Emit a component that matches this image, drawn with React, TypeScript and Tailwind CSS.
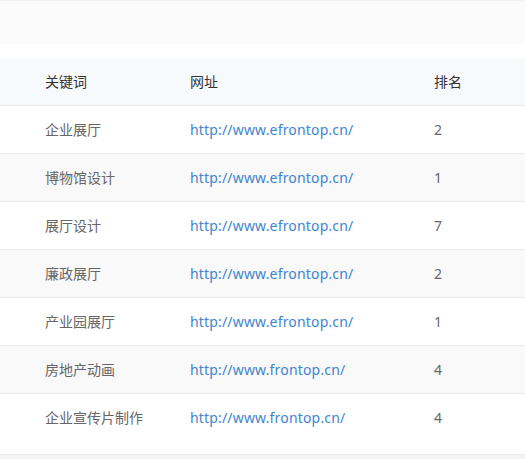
const rows = [
  { kw: '企业展厅', url: 'http://www.efrontop.cn/', rank: 2 },
  { kw: '博物馆设计', url: 'http://www.efrontop.cn/', rank: 1 },
  { kw: '展厅设计', url: 'http://www.efrontop.cn/', rank: 7 },
  { kw: '廉政展厅', url: 'http://www.efrontop.cn/', rank: 2 },
  { kw: '产业园展厅', url: 'http://www.efrontop.cn/', rank: 1 },
  { kw: '房地产动画', url: 'http://www.frontop.cn/', rank: 4 },
  { kw: '企业宣传片制作', url: 'http://www.frontop.cn/', rank: 4 },
];

export default function App() {
  return (
    <div
      className="min-h-[459px] bg-[#f4f4f5] text-[14px]"
      style={{ fontFamily: '"Noto Sans", "Noto Sans CJK SC", sans-serif' }}
    >
      {/* search bar strip */}
      <div className="h-[44px] border-t border-[#f0f0f0] bg-[#fbfbfb]" />

      <div className="bg-white pt-[14px] pb-[13px]">
        <table className="w-full border-collapse text-left">
          <thead>
            <tr className="h-[47px] border-b border-[#e6e8eb] bg-[#f8f9fb] text-[#333]">
              <th className="w-[190px] pl-[45px] font-normal">关键词</th>
              <th className="w-[244px] font-normal">网址</th>
              <th className="font-normal">排名</th>
            </tr>
          </thead>
          <tbody>
            {rows.map((r, i) => (
              <tr
                key={i}
                className={
                  'h-[48px] ' +
                  (i < rows.length - 1 ? 'border-b border-[#e8e8e8] ' : '') +
                  (i % 2 === 1 ? 'bg-[#f9f9f9]' : 'bg-white')
                }
              >
                <td className="pl-[45px] text-[#666]">{r.kw}</td>
                <td>
                  <a href="#" className="tracking-[0.17px] text-[#3f85cf]">
                    {r.url}
                  </a>
                </td>
                <td className="text-[#666]">{r.rank}</td>
              </tr>
            ))}
          </tbody>
        </table>
      </div>
      <div className="border-t border-[#e8e8e8]" />
    </div>
  );
}
